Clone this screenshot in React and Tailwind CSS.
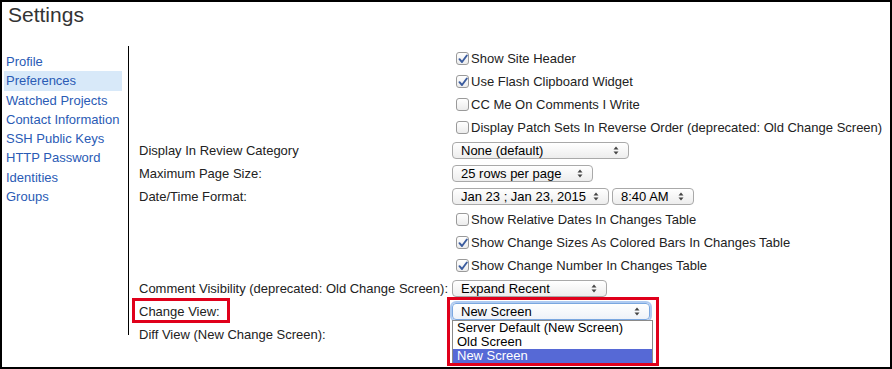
const sideLinks = [
  "Profile",
  "Preferences",
  "Watched Projects",
  "Contact Information",
  "SSH Public Keys",
  "HTTP Password",
  "Identities",
  "Groups",
];

const Arrows = () => (
  <svg width="6" height="9" viewBox="0 0 6 9" className="shrink-0">
    <path d="M3 0.5 L5.5 3.5 H0.5 Z" fill="#444" />
    <path d="M3 8.5 L5.5 5.5 H0.5 Z" fill="#444" />
  </svg>
);

const Select = ({ width, children, focused }) => (
  <div
    className={[
      "flex h-[17px] items-center justify-between rounded-[4px] pl-[8px] pr-[9px] text-[13px] leading-[15px] text-black",
      focused
        ? "border border-[#7aa7e0] shadow-[0_0_0_2px_rgba(110,160,230,0.55)] bg-gradient-to-b from-white to-[#eef2f8]"
        : "border border-[#a9a9a9] bg-gradient-to-b from-white to-[#ededed]",
    ].join(" ")}
    style={{ width }}
  >
    <span>{children}</span>
    <Arrows />
  </div>
);

const Checkbox = ({ checked, label }) => (
  <div className="ml-[4px] flex items-center gap-[2px]">
    <span className="flex h-[13px] w-[13px] items-center justify-center rounded-[3px] border border-[#9a9a9a] bg-gradient-to-b from-white to-[#ececec]">
      {checked ? (
        <svg width="10" height="10" viewBox="0 0 10 10">
          <path
            d="M1.5 5.2 L4 8 L8.8 1.5"
            fill="none"
            stroke="#3b5c9e"
            strokeWidth="1.9"
            strokeLinecap="round"
            strokeLinejoin="round"
          />
        </svg>
      ) : null}
    </span>
    <span>{label}</span>
  </div>
);

const rows = [
  { control: <Checkbox checked label="Show Site Header" /> },
  { control: <Checkbox checked label="Use Flash Clipboard Widget" /> },
  { control: <Checkbox label="CC Me On Comments I Write" /> },
  {
    control: (
      <Checkbox label="Display Patch Sets In Reverse Order (deprecated: Old Change Screen)" />
    ),
  },
  {
    label: "Display In Review Category",
    control: <Select width={177}>None (default)</Select>,
  },
  {
    label: "Maximum Page Size:",
    control: <Select width={141}>25 rows per page</Select>,
  },
  {
    label: "Date/Time Format:",
    control: (
      <div className="flex gap-[3px]">
        <Select width={157}>Jan 23 ; Jan 23, 2015</Select>
        <Select width={82}>8:40 AM</Select>
      </div>
    ),
  },
  { control: <Checkbox label="Show Relative Dates In Changes Table" /> },
  {
    control: (
      <Checkbox checked label="Show Change Sizes As Colored Bars In Changes Table" />
    ),
  },
  { control: <Checkbox checked label="Show Change Number In Changes Table" /> },
  {
    label: "Comment Visibility (deprecated: Old Change Screen):",
    control: <Select width={155}>Expand Recent</Select>,
  },
  {
    label: "Change View:",
    control: (
      <Select width={198} focused>
        New Screen
      </Select>
    ),
  },
  { label: "Diff View (New Change Screen):", control: null },
];

const App = () => {
  return (
    <div className="relative h-[369px] w-[892px] overflow-hidden border-2 border-black bg-white font-['Liberation_Sans',Arial,sans-serif] text-[13px] text-[#222]">
      <h1 className="pl-[6px] text-[21px] leading-[26px] text-[#333]">
        Settings
      </h1>

      <div className="mt-[18px] flex">
        <nav className="h-[289px] w-[127px] shrink-0 border-r border-black pl-[2px] pt-[6px]">
          {sideLinks.map((link) => (
            <div
              className={[
                "h-[19.3px] w-[118px] pl-[2px] leading-[19px] text-[#2a5bb5]",
                link === "Preferences" ? "bg-[#d8e9f9]" : "",
              ].join(" ")}
              key={link}
            >
              {link}
            </div>
          ))}
        </nav>

        <div className="pl-[10px] pt-[1px]">
          {rows.map((row, index) => (
            <div className="flex h-[23px] items-center" key={index}>
              <div className="w-[313px] shrink-0">{row.label}</div>
              {row.control}
            </div>
          ))}
        </div>
      </div>

      {/* highlight around the label */}
      <div className="absolute left-[130px] top-[296px] h-[25px] w-[98px] border-[3px] border-[#e0001b]" />

      {/* open select list */}
      <div className="absolute left-[450px] top-[318px] w-[201px] border border-[#8a8a8a] bg-white text-[13px] leading-[14px] text-black">
        <div className="h-[14px] pl-[4px]">Server Default (New Screen)</div>
        <div className="h-[14px] pl-[4px]">Old Screen</div>
        <div className="h-[15px] bg-[#5669d6] pl-[4px] text-white">New Screen</div>
      </div>

      {/* highlight around the control */}
      <div className="absolute left-[445px] top-[295px] h-[69px] w-[212px] border-[3px] border-[#e0001b]" />
    </div>
  );
};

export default App;
